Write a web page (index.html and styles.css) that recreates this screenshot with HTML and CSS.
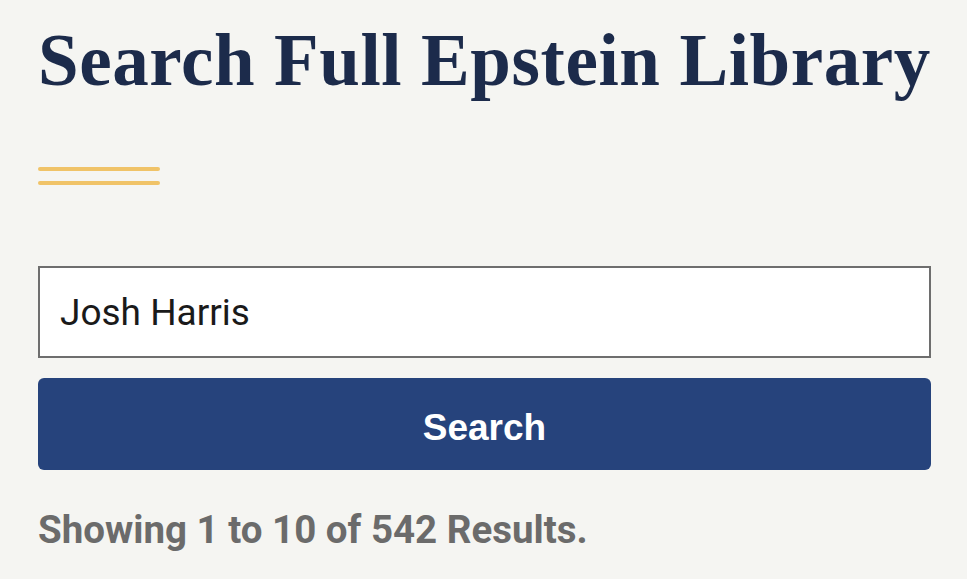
FILE: index.html
```html
<!DOCTYPE html>
<html lang="en">
<head>
<meta charset="utf-8">
<title>Search Full Epstein Library</title>
<link rel="stylesheet" href="styles.css">
</head>
<body>
<main class="page">
  <h1 class="title">Search Full Epstein Library</h1>
  <div class="rule"><span></span><span></span></div>
  <form class="search">
    <input class="field" type="text" value="Josh Harris">
    <button class="btn" type="button">Search</button>
  </form>
  <p class="count">Showing 1 to 10 of 542 Results.</p>
</main>
</body>
</html>
```
FILE: styles.css
```css
html, body {
  margin: 0;
  padding: 0;
  background: #f5f5f2;
}
.page {
  width: 893px;
  padding: 19px 0 0 38px;
  display: flex;
  flex-direction: column;
}
.title {
  margin: 0;
  font-family: "Liberation Serif", serif;
  font-weight: 700;
  font-size: 73px;
  line-height: 84px;
  letter-spacing: 0.6px;
  color: #1c2b4b;
  white-space: nowrap;
}
.rule {
  margin-top: 64px;
  width: 122px;
  display: flex;
  flex-direction: column;
  gap: 10px;
}
.rule span {
  display: block;
  height: 4px;
  background: #f0c368;
  border-radius: 2px;
}
.search {
  margin: 81px 0 0 0;
  display: flex;
  flex-direction: column;
  gap: 20px;
}
.field {
  box-sizing: border-box;
  width: 893px;
  height: 92px;
  margin: 0;
  padding: 0 20px;
  border: 2px solid #6e6e6e;
  border-radius: 0;
  background: #fff;
  font-family: Roboto, sans-serif;
  font-size: 37px;
  color: #1a1a1a;
  outline: none;
}
.btn {
  width: 893px;
  height: 92px;
  margin: 0;
  border: 0;
  border-radius: 6px;
  background: #26437c;
  color: #fff;
  font-family: "Liberation Sans", Arial, sans-serif;
  font-weight: 700;
  font-size: 37px;
  line-height: 92px;
  padding: 0;
  padding-top: 4px;
}
.count {
  margin: 37px 0 0 0;
  font-family: Roboto, sans-serif;
  font-weight: 700;
  font-size: 38.5px;
  line-height: 45px;
  color: #6b6b6b;
}
```
